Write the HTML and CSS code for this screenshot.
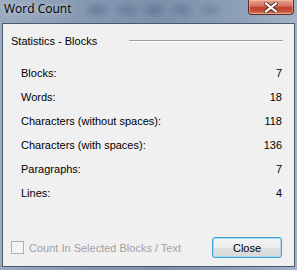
FILE: index.html
```html
<!DOCTYPE html>
<html>
<head>
<meta charset="utf-8">
<link rel="stylesheet" href="styles.css">
</head>
<body>
<div class="window">
  <div class="titlebar">
    <span class="title">Word Count</span>
    <button class="xbtn"><svg width="14" height="11" viewBox="0 0 14 11"><path d="M2 1.5 L12 9.5 M12 1.5 L2 9.5" stroke="#5a2a22" stroke-width="4" stroke-linecap="square"/><path d="M2 1.5 L12 9.5 M12 1.5 L2 9.5" stroke="#ffffff" stroke-width="2.2" stroke-linecap="square"/></svg></button>
  </div>
  <div class="client">
    <div class="group">
      <span class="group-title">Statistics - Blocks</span>
      <span class="rule"></span>
    </div>
    <div class="stats">
      <div class="row"><span>Blocks:</span><span>7</span></div>
      <div class="row"><span>Words:</span><span>18</span></div>
      <div class="row"><span>Characters (without spaces):</span><span>118</span></div>
      <div class="row"><span>Characters (with spaces):</span><span>136</span></div>
      <div class="row"><span>Paragraphs:</span><span>7</span></div>
      <div class="row"><span>Lines:</span><span>4</span></div>
    </div>
    <div class="footer">
      <label class="check"><span class="box"></span>Count In Selected Blocks / Text</label>
      <button class="close">Close</button>
    </div>
  </div>
</div>
</body>
</html>
```
FILE: styles.css
```css
html, body {
  margin: 0;
  padding: 0;
}
body {
  width: 297px;
  height: 270px;
  overflow: hidden;
  font-family: "Liberation Sans", Arial, sans-serif;
  font-size: 11px;
  color: #000;
}
.window {
  width: 297px;
  height: 270px;
  box-sizing: border-box;
  display: flex;
  flex-direction: column;
  background: linear-gradient(90deg, #9aabc0 0%, #8497b0 30%, #7c90aa 55%, #8da0b8 80%, #a3b3c6 100%);
  padding: 0 2px 3px 2px;
}
.titlebar {
  height: 23px;
  flex: none;
  display: flex;
  align-items: flex-start;
  position: relative;
  background:
    radial-gradient(ellipse 14px 9px at 95px 10px, rgba(60,80,115,0.35), transparent),
    radial-gradient(ellipse 14px 9px at 125px 10px, rgba(60,80,115,0.3), transparent),
    radial-gradient(ellipse 14px 9px at 152px 10px, rgba(60,80,115,0.35), transparent),
    radial-gradient(ellipse 14px 9px at 180px 10px, rgba(60,80,115,0.3), transparent),
    radial-gradient(ellipse 14px 9px at 208px 10px, rgba(60,80,115,0.25), transparent);
}
.title {
  font-family: "Open Sans", "Liberation Sans", sans-serif;
  font-size: 12px;
  color: #000;
  margin: 1px 0 0 2px;
  line-height: 16px;
  text-shadow: 0 0 6px rgba(255,255,255,0.7);
}
.xbtn {
  position: absolute;
  right: 1px;
  top: 0;
  width: 46px;
  height: 15px;
  padding: 0;
  border: 1px solid #5b2a24;
  border-top: none;
  border-radius: 0 0 4px 4px;
  background: linear-gradient(180deg, #e8a590 0%, #d47562 40%, #c0412b 55%, #c6503a 80%, #dd8c70 100%);
  box-shadow: inset 0 0 0 1px rgba(255,200,180,0.5);
  display: flex;
  align-items: center;
  justify-content: center;
}
.client {
  flex: 1;
  background: #f0f0f0;
  border: 1px solid #4c5a6c;
  display: flex;
  flex-direction: column;
  padding: 0 12px 0 8px;
}
.group {
  display: flex;
  align-items: center;
  margin-top: 8px;
  height: 18px;
}
.group-title {
  color: #000;
}
.rule {
  flex: 1;
  height: 0;
  border-top: 1px solid #a0a0a0;
  border-bottom: 1px solid #ffffff;
  margin-left: 32px;
  margin-right: -1px;
}
.stats {
  display: flex;
  flex-direction: column;
  margin: 16px 0 0 10px;
}
.row {
  display: flex;
  justify-content: space-between;
  height: 24px;
  line-height: 14px;
}
.footer {
  margin-top: auto;
  margin-bottom: 8px;
  display: flex;
  align-items: center;
  justify-content: space-between;
}
.check {
  display: flex;
  align-items: center;
  color: #a0a0a0;
}
.box {
  width: 11px;
  height: 11px;
  border: 1px solid #b0b0b0;
  background: #f4f4f4;
  margin-right: 5px;
}
.close {
  width: 70px;
  height: 21px;
  font-family: "Liberation Sans", Arial, sans-serif;
  font-size: 11px;
  color: #000;
  border: 1px solid #3c9fd8;
  border-radius: 3px;
  background: linear-gradient(180deg, #f4f4f4 0%, #ececec 50%, #e0e0e0 51%, #d8d8d8 100%);
  box-shadow: inset 0 0 0 1px #a9dcf7;
  padding: 0;
}
```
